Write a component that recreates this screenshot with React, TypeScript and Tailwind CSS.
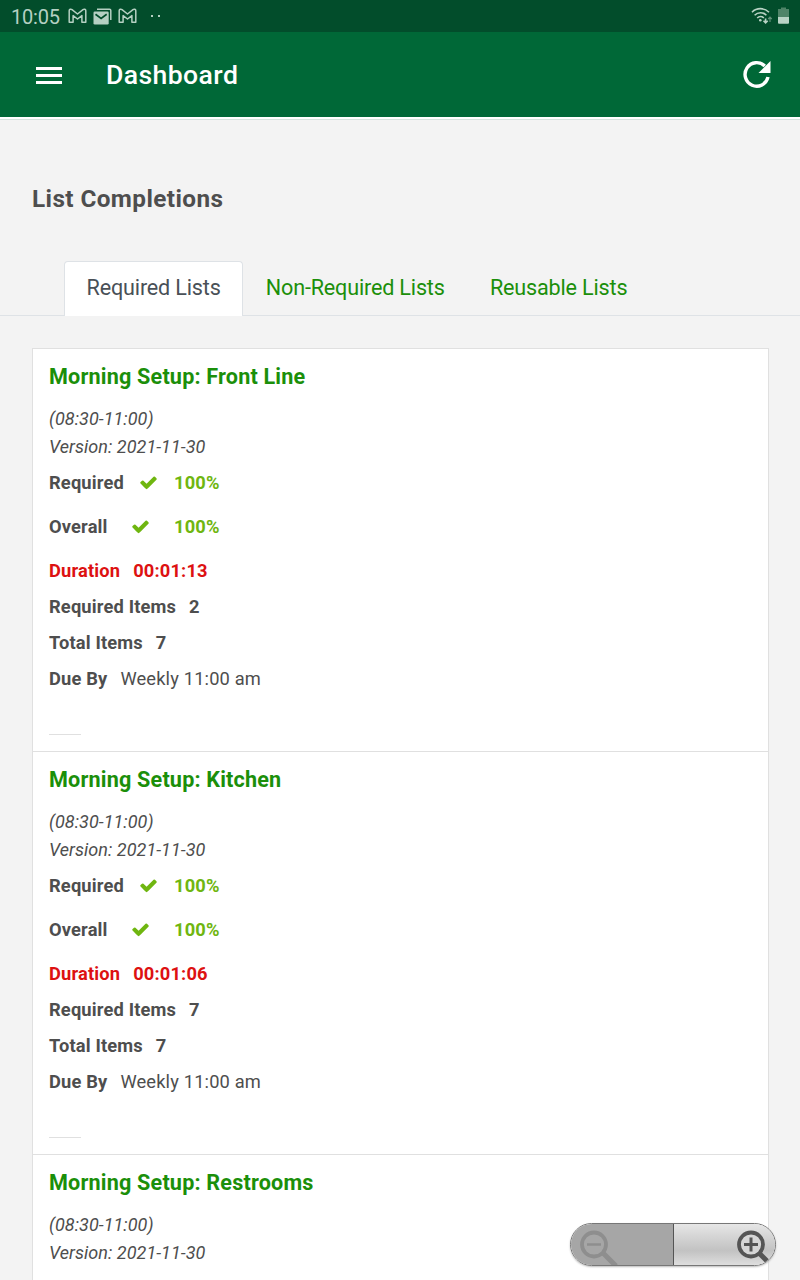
import type { ReactNode } from "react";

type ListDetails = {
  duration: string;
  requiredItems: number;
  totalItems: number;
  dueBy: string;
};

type ListEntry = {
  name: string;
  window: string;
  version: string;
  details?: ListDetails;
};

const lists: ListEntry[] = [
  {
    name: "Morning Setup: Front Line",
    window: "(08:30-11:00)",
    version: "2021-11-30",
    details: { duration: "00:01:13", requiredItems: 2, totalItems: 7, dueBy: "Weekly 11:00 am" },
  },
  {
    name: "Morning Setup: Kitchen",
    window: "(08:30-11:00)",
    version: "2021-11-30",
    details: { duration: "00:01:06", requiredItems: 7, totalItems: 7, dueBy: "Weekly 11:00 am" },
  },
  {
    name: "Morning Setup: Restrooms",
    window: "(08:30-11:00)",
    version: "2021-11-30",
  },
];

const tabs = ["Required Lists", "Non-Required Lists", "Reusable Lists"];

function GmailIcon() {
  return (
    <svg width="19" height="16" viewBox="0 0 19 16" fill="none" stroke="#b5d0c2" strokeWidth="1.5" strokeLinejoin="round">
      <path d="M1.200 14.200V2.800c0-1.600 1.700-2.100 2.800-1.200L9.500 6 15 1.600c1.100-.9 2.800-.4 2.800 1.200v11.400h-3.900V7.600L9.500 11 5.100 7.600v6.600z" />
    </svg>
  );
}

function MailStackIcon() {
  return (
    <svg width="19" height="17" viewBox="0 0 19 17" fill="none">
      <path d="M4 1.200h12.500q1.300 0 1.300 1.300v9.500" stroke="#b5d0c2" strokeWidth="1.500" />
      <rect x="0.500" y="3.500" width="15.200" height="13" rx="1.300" fill="#b5d0c2" />
      <path d="M2.500 6.300 8.100 10.500l5.600-4.200" stroke="#024d2b" strokeWidth="1.700" />
    </svg>
  );
}

function WifiIcon() {
  return (
    <svg width="22" height="18" viewBox="0 0 22 18" fill="none" stroke="#b9d3c5" strokeWidth="1.600">
      <path d="M1 5.200a12 12 0 0 1 17 0" />
      <path d="M3.600 8.200a8.300 8.300 0 0 1 11.800 0" />
      <path d="M6.200 11a4.700 4.700 0 0 1 6.600 0" />
      <circle cx="9.300" cy="13.200" r="1.300" fill="#b9d3c5" stroke="none" />
      <path d="M14.600 11.500v4M12.500 13.700l2.100 2.200 2.100-2.200" />
      <path d="M19 15v-4.500M17.200 12l1.800-1.800 1.800 1.800" stroke="#5f9077" strokeWidth="1.200" />
    </svg>
  );
}

function BatteryIcon() {
  return (
    <svg width="11" height="18" viewBox="0 0 11 18">
      <path d="M3 0.500h5v1.500h3V10.500H0V2h3z" fill="#4f8468" />
      <path d="M0 10h11v5.800q0 1-1 1H1q-1 0-1-1z" fill="#b9d3c5" />
    </svg>
  );
}

function CheckIcon() {
  return (
    <svg width="19" height="19" viewBox="0 0 1792 1792" fill="#6fb610">
      <path d="M1671 566q0 40-28 68l-724 724-136 136q-28 28-68 28t-68-28l-136-136-362-362q-28-28-28-68t28-68l136-136q28-28 68-28t68 28l294 295 656-657q28-28 68-28t68 28l136 136q28 28 28 68z" />
    </svg>
  );
}

function StatusBar() {
  return (
    <div className="flex h-8 items-center bg-[#024d2b] px-[11px]">
      <span className="w-[57px] pt-px text-[20px] tracking-[-0.2px] whitespace-nowrap text-[#b5d0c2]">10:05</span>
      <GmailIcon />
      <span className="ml-[6px]">
        <MailStackIcon />
      </span>
      <span className="ml-[6px]">
        <GmailIcon />
      </span>
      <span className="ml-[14px] flex gap-[5px]">
        <i className="size-[2px] bg-[#b5d0c2]" />
        <i className="size-[2px] bg-[#b5d0c2]" />
      </span>
      <span className="ml-auto">
        <WifiIcon />
      </span>
      <span className="ml-[5px]">
        <BatteryIcon />
      </span>
    </div>
  );
}

function Header() {
  return (
    <header className="flex h-[85px] items-center bg-[#006837] pr-[29px] pl-9 text-white">
      <div className="flex w-[26px] flex-col gap-[4px] pt-px">
        <i className="h-[3px] bg-white" />
        <i className="h-[3px] bg-white" />
        <i className="h-[3px] bg-white" />
      </div>
      <h1 className="ml-11 text-[26.6px] font-medium tracking-[0.4px]">Dashboard</h1>
      <svg className="ml-auto" width="28" height="30" viewBox="0 0 28 30" fill="none">
        <path d="M25 17A11.600 11.800 0 1 1 21.800 6" stroke="#fff" strokeWidth="3.400" />
        <path d="M27.500 1v12H15.500z" fill="#fff" />
      </svg>
    </header>
  );
}

function Line(props: { label: string; children: ReactNode }) {
  return (
    <div className="flex h-9 items-center gap-[13px] font-bold">
      <span>{props.label}</span>
      {props.children}
    </div>
  );
}

function Completion(props: { label: string; labelClass: string; iconClass: string }) {
  return (
    <div className="flex h-11 items-center font-bold">
      <span className={props.labelClass}>{props.label}</span>
      <span className={props.iconClass}>
        <CheckIcon />
      </span>
      <span className="text-[#6fb610]">100%</span>
    </div>
  );
}

function Details({ details }: { details: ListDetails }) {
  return (
    <div className="text-[18.3px] tracking-[0.16px]">
      <Completion label="Required" labelClass="w-[90px]" iconClass="w-[35px] pb-[2px]" />
      <Completion label="Overall" labelClass="w-[82px]" iconClass="w-[43px] pb-[2px]" />
      <div className="mt-1 text-[#dd1111]">
        <Line label="Duration">
          <span>{details.duration}</span>
        </Line>
      </div>
      <Line label="Required Items">
        <span>{details.requiredItems}</span>
      </Line>
      <Line label="Total Items">
        <span>{details.totalItems}</span>
      </Line>
      <Line label="Due By">
        <span className="font-normal">{details.dueBy}</span>
      </Line>
      <hr className="mt-[37px] w-8 border-[#e0e0e0]" />
    </div>
  );
}

function ListCard({ entry }: { entry: ListEntry }) {
  return (
    <li className="h-[403px] border-t border-[#e0e0e0] px-4 text-[18px] text-[#4e4e4e]">
      <h3 className="mt-[10px] h-9 text-[21.6px] leading-9 font-bold tracking-[0.18px] text-[#1b8f0a]">
        {entry.name}
      </h3>
      <div className="mt-[10px] leading-7 tracking-[0.04px] italic">
        <div>{entry.window}</div>
        <div>Version: {entry.version}</div>
      </div>
      {entry.details ? <Details details={entry.details} /> : null}
    </li>
  );
}

function ZoomControls() {
  return (
    <div className="absolute top-[1223px] left-[570px] flex h-[43px] w-[206px] overflow-hidden rounded-full border border-[#777] shadow-[0_1px_2px_#bbb]">
      <button className="w-[103px] border-r border-[#555] bg-[#a6a6a6]">
        <svg className="block" width="102" height="41" viewBox="0 0 102 41" fill="none" stroke="#8e8e8e">
          <path d="m32 29 13 13" strokeWidth="5" />
          <circle cx="23" cy="20.500" r="12" strokeWidth="3.800" />
          <path d="M16 20.500h14" strokeWidth="2.500" />
        </svg>
      </button>
      <button className="flex-1 bg-linear-to-b from-[#e6e6e6] via-[#c2c2c2] via-65% to-[#dedede]">
        <svg className="block" width="101" height="41" viewBox="0 0 101 41" fill="none" stroke="#555">
          <path d="m85 29 12 12" strokeWidth="5" />
          <circle cx="77" cy="20.500" r="12" fill="#d6d6d6" strokeWidth="3.800" />
          <path d="M70 20.500h14M77 13.500v14" strokeWidth="3" />
        </svg>
      </button>
    </div>
  );
}

export default function App() {
  return (
    <div className="relative h-[1280px] w-[800px] overflow-hidden bg-[#f3f3f3] font-[Roboto,sans-serif]">
      <StatusBar />
      <Header />
      <div className="h-[3px] border-b border-[#d5e2dc] bg-white" />

      <h2 className="mt-[61px] ml-8 h-[36px] text-[24.3px] leading-9 font-bold tracking-[0.42px] text-[#4e4e4e]">
        List Completions
      </h2>

      <nav className="mt-[44px] flex h-[55px] border-b border-[#dee2e6] pl-16 text-[21.6px] tracking-[-0.18px]">
        {tabs.map((tab, i) => (
          <a
            key={tab}
            className={
              i === 0
                ? "-mb-px h-[55px] rounded-t border border-b-0 border-[#dee2e6] bg-white px-[21.6px] leading-[52px] text-[#495057]"
                : "h-[54px] border border-transparent px-[21.6px] leading-[52px] text-[#1b8f0a]"
            }
          >
            {tab}
          </a>
        ))}
      </nav>

      <ul className="mt-8 ml-8 w-[737px] border-x border-[#e0e0e0] bg-white">
        {lists.map((entry) => (
          <ListCard key={entry.name} entry={entry} />
        ))}
      </ul>

      <ZoomControls />
    </div>
  );
}
